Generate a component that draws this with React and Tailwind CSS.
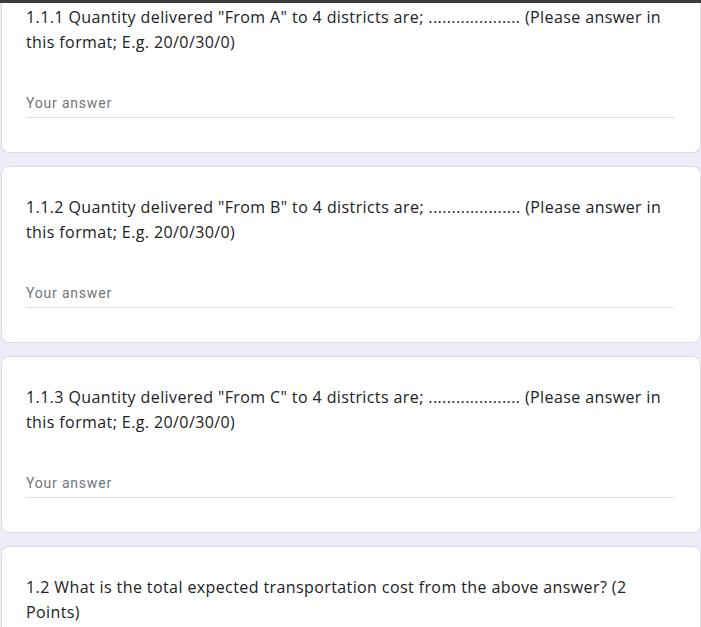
import React from 'react';

const dots = '....................';

const questions = [
    { id: 'a', title: `1.1.1 Quantity delivered "From A" to 4 districts are; ${dots} (Please answer in this format; E.g. 20/0/30/0)`, first: true },
    { id: 'b', title: `1.1.2 Quantity delivered "From B" to 4 districts are; ${dots} (Please answer in this format; E.g. 20/0/30/0)` },
    { id: 'c', title: `1.1.3 Quantity delivered "From C" to 4 districts are; ${dots} (Please answer in this format; E.g. 20/0/30/0)` },
    { id: 'd', title: '1.2 What is the total expected transportation cost from the above answer? (2 Points)' },
];

function QuestionCard({ q }) {
    return (
        <div
            className={`bg-white border border-[#dadce0] rounded-lg pl-6 pr-[26px] pb-[34px] ${q.first ? 'border-t-0 rounded-t-none pt-[2px]' : 'pt-[28px]'}`}
        >
            <div className="text-[16px] leading-[25px] text-[#202124] font-['Open_Sans',sans-serif] tracking-[0.4px]">
                {q.title}
            </div>
            <div className="mt-[38px] border-b border-[#e0e0e0] pb-[4px]">
                <div className="text-[14px] leading-[20px] text-[#70757a] font-['Roboto',sans-serif] tracking-[0.8px]">
                    Your answer
                </div>
            </div>
        </div>
    );
}

export default function App() {
    return (
        <div className="w-[701px] h-[627px] overflow-hidden bg-[#f0ebf8]">
            <div className="h-[3px] bg-[#3c3c3c]" />
            <div className="flex flex-col gap-[13px] pl-px">
                {questions.map(q => (
                    <QuestionCard key={q.id} q={q} />
                ))}
            </div>
        </div>
    );
}
